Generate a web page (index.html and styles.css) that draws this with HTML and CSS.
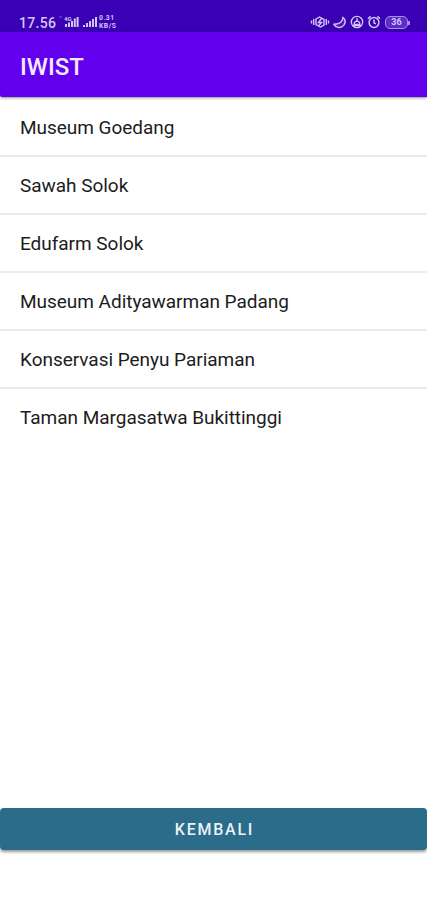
FILE: index.html
```
<!DOCTYPE html>
<html lang="id">
<head>
    <meta charset="UTF-8">
    <meta name="viewport" content="width=device-width, initial-scale=1.0">
    <title>IWIST</title>
    <link rel="stylesheet" href="styles.css">
</head>

<body>
    <div class="screen">

        <div class="status_bar">
            <div class="status_left">
                <span class="time">17.56</span>
                <svg class="signal" width="42" height="14" viewBox="0 0 42 14">
                    <path d="M1 2h3" stroke="#c5b2f0" stroke-width="1" opacity=".5"/>
                    <text x="6" y="5.500" class="net">4G</text>
                    <path d="M8 12V9M11 12V7.500M14 12V6M16.800 12V3.500M19.600 12V2M26 12V10M29 12V8M32 12V6M35 12V4M38 12V2" stroke="#d5c6f6" stroke-width="2"/>
                </svg>
                <div class="speed">
                    <span>0.31</span>
                    <span>KB/S</span>
                </div>
            </div>
            <div class="status_right">
                <!-- vibrate -->
                <svg width="20" height="14" viewBox="0 0 20 14">
                    <g fill="none" stroke="#d5c6f6" stroke-width="1.400">
                        <path d="M1.500 5.500v3M3.700 4v6M16.300 4v6M18.500 5.500v3"/>
                        <path d="M6 4 9.500 2 14 4.500V10L10.500 12 6 9.500zM11.500 3.500 8.500 7.500h3L8.500 11"/>
                    </g>
                </svg>
                <!-- moon -->
                <svg width="14" height="14" viewBox="0 0 14 14">
                    <path d="M10 2.500C13.500 5 12.500 10 8.800 11.800 5.800 13.200 2.400 12 1 9.300L4.500 8.800C7.500 8 9.500 6 10 2.500z" fill="#4c19bf" stroke="#d5c6f6" stroke-width="1.500"/>
                </svg>
                <!-- data saver -->
                <svg width="14" height="14" viewBox="0 0 14 14">
                    <g fill="none" stroke="#d5c6f6" stroke-width="1.300">
                        <circle cx="7" cy="7" r="5.700"/>
                        <path d="M7 3v4M4.300 9.500V7.500L7 5.500 9.700 7.500V9.500zM3 10.500h8"/>
                    </g>
                </svg>
                <!-- alarm -->
                <svg width="14" height="14" viewBox="0 0 14 14">
                    <g fill="none" stroke="#d5c6f6" stroke-width="1.500">
                        <circle cx="7" cy="7.500" r="4.900"/>
                        <path d="M7 4.500v3.300l2 1M1 3.700 3.600 1.400M13 3.700 10.400 1.400"/>
                    </g>
                </svg>
                <div class="battery">36</div>
            </div>
        </div>

        <div class="app_bar">
            <h1 class="title">IWIST</h1>
        </div>

        <ul class="list">
            <li class="item">Museum Goedang</li>
            <li class="item">Sawah Solok</li>
            <li class="item">Edufarm Solok</li>
            <li class="item">Museum Adityawarman Padang</li>
            <li class="item">Konservasi Penyu Pariaman</li>
            <li class="item">Taman Margasatwa Bukittinggi</li>
        </ul>

        <button type="button" class="btn_back">KEMBALI</button>

    </div>
</body>
</html>
```

FILE: styles.css
```
*{
  box-sizing: border-box;
}
body{
  margin: 0;
  font-family: Roboto, "Liberation Sans", sans-serif;
  background-color: #fff;
}
div.screen{
  display: flex;
  flex-direction: column;
  height: 900px;
  padding-bottom: 50px;
}

/* status bar */
div.status_bar{
  display: flex;
  justify-content: space-between;
  height: 32px;
  padding: 14px 17px 0 19px;
  background-color: #3900b4;
  color: #d5c6f6;
}
div.status_left,
div.status_right{
  display: flex;
  align-items: center;
  height: 16px;
}
div.status_right{
  gap: 3px;
}
span.time{
  width: 39px;
  padding-top: 2px;
  font-size: 14px;
  font-weight: 500;
  letter-spacing: 0.3px;
  line-height: 18px;
}
text.net{
  font-size: 6px;
  font-weight: 700;
  fill: #d5c6f6;
}
div.speed{
  display: flex;
  flex-direction: column;
  gap: 1px;
  margin-left: -1px;
  font-size: 6.8px;
  font-weight: 700;
  letter-spacing: 0.5px;
  line-height: 7px;
}
div.battery{
  position: relative;
  width: 23px;
  height: 13px;
  margin: 0 2px 0 1px;
  border: 1px solid #a98fe8;
  border-radius: 5px;
  background-color: #5c2cc8;
  font-size: 9px;
  font-weight: 700;
  line-height: 11px;
  text-align: center;
}
div.battery::after{
  content: "";
  position: absolute;
  top: 4px;
  right: -3px;
  width: 2px;
  height: 4px;
  background-color: #a98fe8;
}

/* app bar */
div.app_bar{
  display: flex;
  align-items: center;
  height: 65px;
  padding: 4px 20px 0;
  background-color: #6200ee;
  border-radius: 0 0 0 2px;
  box-shadow: 0 1px 3px rgba(0, 0, 0, 0.45);
}
h1.title{
  margin: 0;
  color: #f3eafe;
  font-size: 24px;
  font-weight: 500;
}

/* list */
ul.list{
  flex-grow: 1;
  margin: 0;
  padding: 0;
  list-style: none;
}
li.item{
  display: flex;
  align-items: center;
  height: 58px;
  padding: 1px 20px 0;
  border-bottom: 2px solid #ececec;
  color: #1c1c1c;
  font-size: 19px;
  letter-spacing: -0.03px;
}
li.item:first-child{
  height: 60px;
  padding-top: 3px;
}
li.item:last-child{
  padding-bottom: 2px;
  border-bottom: 0;
}

/* button */
button.btn_back{
  height: 42px;
  padding: 1px 0 0 2px;
  border: 0;
  border-radius: 4px;
  background-color: #2b6c8b;
  box-shadow: 0 2px 3px rgba(0, 0, 0, 0.4);
  color: #e9f3f8;
  font-family: inherit;
  font-size: 16px;
  font-weight: 500;
  letter-spacing: 1.75px;
}
```
